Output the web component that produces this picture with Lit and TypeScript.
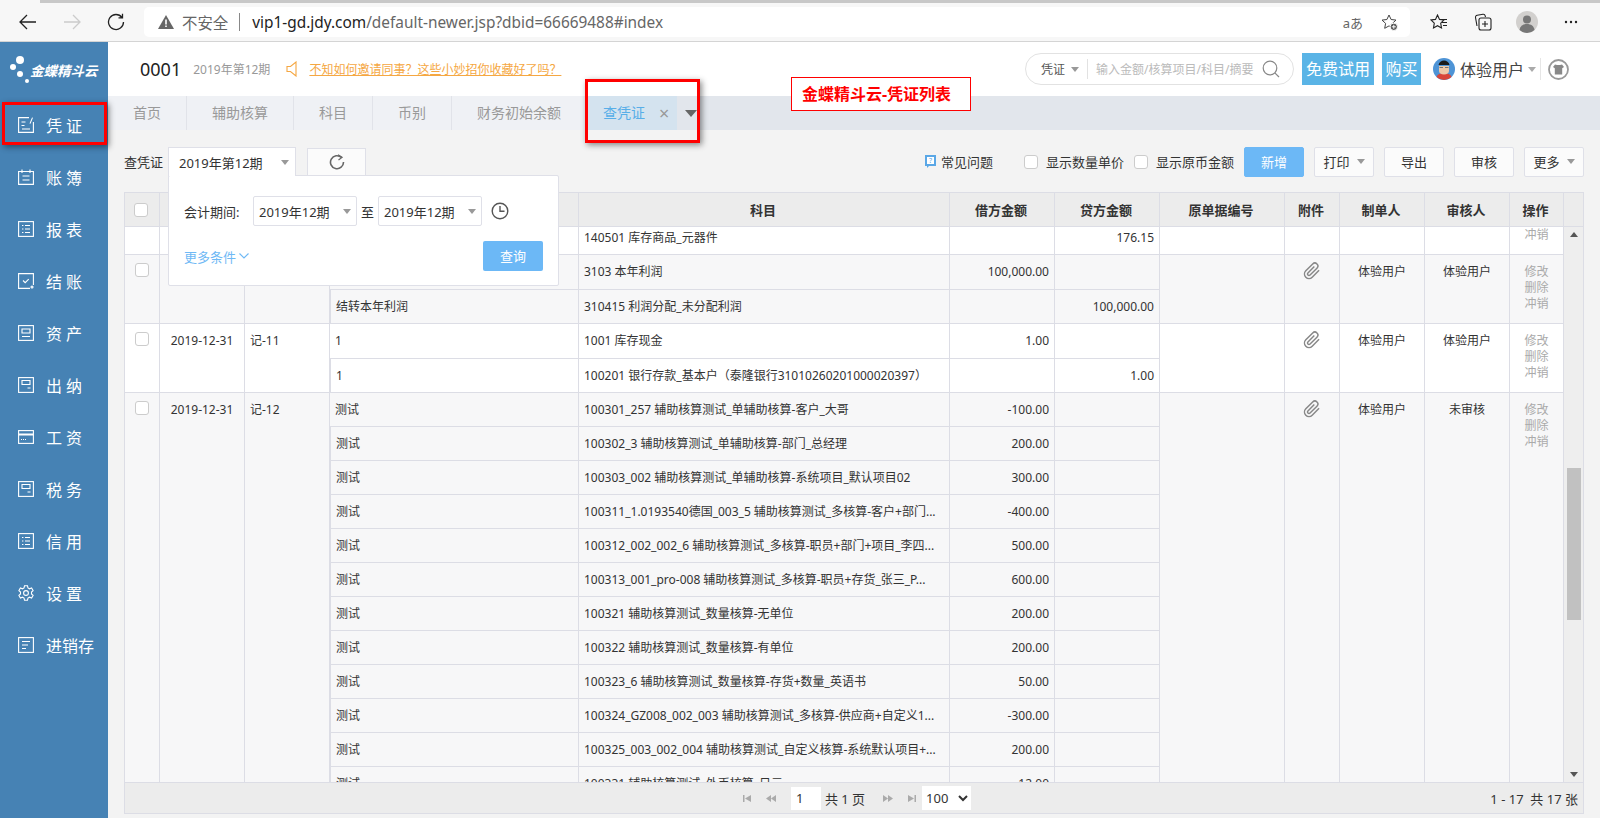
import { LitElement, html, css, svg } from 'lit';
import { customElement } from 'lit/decorators.js';

interface Row {
  summary: string;
  account: string;
  debit?: string;
  credit?: string;
  tall?: boolean;
}

interface Voucher {
  date: string;
  no: string;
  attach: boolean;
  maker: string;
  auditor: string;
  ops: string[];
  partial?: boolean; // scrolled, only its last row is in view
  rows: Row[];
}

const ri = (d: any) => html`<svg class="nav-ico" viewBox="0 0 16 16" fill="none" stroke="#fff" stroke-width="1.1">${d}</svg>`;

const listIcon = svg`<rect x=".6" y=".6" width="14.8" height="14.8"/><path d="M4 4.5h1.4M7 4.5h5M4 8h1.4M7 8h5M4 11.5h1.4M7 11.5h5"/>`;
const boxIcon = svg`<rect x=".6" y=".6" width="14.8" height="14.8"/><path d="M4 3.5h8v4H4zM9.5 11h3"/>`;

const NAV = [
  { name: '凭证', wide: true, icon: ri(svg`<path d="M11 .6H.6v14.8h14.8V5M3.5 5h4M3.5 8.500h3M14.500 .6l-2.500 6M4 12h8"/>`) },
  { name: '账簿', wide: true, icon: ri(svg`<path d="M.6 2.500h14.800v12.900H.6zM4 .4v3.500M12 .4v3.500M4.500 7h7M4.500 11h7"/>`) },
  { name: '报表', wide: true, icon: ri(listIcon) },
  { name: '结账', wide: true, icon: ri(svg`<path d="M15.400 12V.6H.6v14.800H12M5 7.500l2.200 2.200 3.500-3.500"/><circle cx="14" cy="14" r="1"/>`) },
  { name: '资产', wide: true, icon: ri(svg`<rect x=".6" y=".6" width="14.8" height="14.8"/><path d="M4 4h8v4H4zM4 11.500h8"/>`) },
  { name: '出纳', wide: true, icon: ri(boxIcon) },
  { name: '工资', wide: true, icon: ri(svg`<rect x=".6" y="1.600" width="14.8" height="12.8"/><path d="M.6 5.500h14.800" stroke-width="2"/><path d="M3 10.500h5" stroke-dasharray="1 1"/>`) },
  { name: '税务', wide: true, icon: ri(boxIcon) },
  { name: '信用', wide: true, icon: ri(listIcon) },
  { name: '设置', wide: true, icon: ri(svg`<path d="M6.500 .8h3l.5 2.200 1.500.8 2.100-.8 1.500 2.600-1.600 1.500v1.800l1.600 1.500-1.500 2.600-2.100-.8-1.500.8-.5 2.200h-3L6 13l-1.500-.8-2.100.8L.9 10.400l1.600-1.500V7.100L.9 5.600l1.500-2.600 2.100.8L6 3z"/><circle cx="8" cy="8" r="2.400"/>`) },
  { name: '进销存', wide: false, icon: ri(svg`<rect x=".6" y=".6" width="14.8" height="14.8"/><path d="M4 4.500h8M4 8h6M4 11.500h4"/>`) },
];

const TABS = ['首页', '辅助核算', '科目', '币别', '财务初始余额'];

const COLS = [36, 85, 85, 249, 371, 105, 105, 125, 55, 85, 85, 54];

// the first three titles sit under the query popup
const HEAD = ['', '', '', '', '科目', '借方金额', '贷方金额', '原单据编号', '附件', '制单人', '审核人', '操作'];

const VOUCHERS: Voucher[] = [
  {
    date: '', no: '', attach: false, maker: '', auditor: '', ops: ['冲销'], partial: true,
    rows: [{ summary: '', account: '140501 库存商品_元器件', credit: '176.15' }],
  },
  {
    date: '', no: '', attach: true, maker: '体验用户', auditor: '体验用户', ops: ['修改', '删除', '冲销'],
    rows: [
      { summary: '', account: '3103 本年利润', debit: '100,000.00', tall: true },
      { summary: '结转本年利润', account: '310415 利润分配_未分配利润', credit: '100,000.00' },
    ],
  },
  {
    date: '2019-12-31', no: '记-11', attach: true, maker: '体验用户', auditor: '体验用户', ops: ['修改', '删除', '冲销'],
    rows: [
      { summary: '1', account: '1001 库存现金', debit: '1.00', tall: true },
      { summary: '1', account: '100201 银行存款_基本户（泰隆银行31010260201000020397）', credit: '1.00' },
    ],
  },
  {
    date: '2019-12-31', no: '记-12', attach: true, maker: '体验用户', auditor: '未审核', ops: ['修改', '删除', '冲销'],
    rows: [
      { summary: '测试', account: '100301_257 辅助核算测试_单辅助核算-客户_大哥', debit: '-100.00' },
      { summary: '测试', account: '100302_3 辅助核算测试_单辅助核算-部门_总经理', debit: '200.00' },
      { summary: '测试', account: '100303_002 辅助核算测试_单辅助核算-系统项目_默认项目02', debit: '300.00' },
      { summary: '测试', account: '100311_1.0193540德国_003_5 辅助核算测试_多核算-客户+部门...', debit: '-400.00' },
      { summary: '测试', account: '100312_002_002_6 辅助核算测试_多核算-职员+部门+项目_李四...', debit: '500.00' },
      { summary: '测试', account: '100313_001_pro-008 辅助核算测试_多核算-职员+存货_张三_P...', debit: '600.00' },
      { summary: '测试', account: '100321 辅助核算测试_数量核算-无单位', debit: '200.00' },
      { summary: '测试', account: '100322 辅助核算测试_数量核算-有单位', debit: '200.00' },
      { summary: '测试', account: '100323_6 辅助核算测试_数量核算-存货+数量_英语书', debit: '50.00' },
      { summary: '测试', account: '100324_GZ008_002_003 辅助核算测试_多核算-供应商+自定义1...', debit: '-300.00' },
      { summary: '测试', account: '100325_003_002_004 辅助核算测试_自定义核算-系统默认项目+...', debit: '200.00' },
      { summary: '测试', account: '100331 辅助核算测试_外币核算_日元', debit: '-12.00' },
    ],
  },
];

@customElement('app-root')
export class AppRoot extends LitElement {
  static styles = css`
    :host {
      display: block;
      width: 1600px;
      height: 818px;
      overflow: hidden;
      position: relative;
      font-family: "Noto Sans", "Noto Sans CJK SC", sans-serif;
      font-size: 12px;
      color: #333;
      background: #f3f3f3;
    }
    svg { display: block; flex: none; }

    /* browser chrome */
    .chrome { height: 42px; background: #f7f7f7; border-bottom: 1px solid #d4d4d4; box-sizing: border-box; }
    .strip { height: 3px; margin-left: 40px; background: #c8c8c8; }
    .bar { display: flex; align-items: center; height: 30px; margin-top: 4px; padding: 0 7px 0 6px; }
    .bar-btn { width: 44px; display: flex; justify-content: center; align-items: center; }
    .addr {
      flex: 1; height: 30px; margin: 0 7px 0 6px; background: #fff; border-radius: 5px;
      display: flex; align-items: center; padding: 0 12px 0 14px; font-size: 15.4px; color: #666;
    }
    .addr .warn { margin-right: 8px; }
    .addr .sep { width: 1px; height: 18px; background: #888; margin: 0 12px 0 11px; }
    .addr .host { color: #222; }
    .addr .end { margin-left: auto; display: flex; align-items: center; gap: 18px; }
    .addr .aa { font-size: 13px; color: #666; }

    .app { display: flex; height: 776px; }

    /* sidebar */
    .side { width: 108px; flex: none; background: #4682b4; color: #fff; }
    .logo { height: 57px; display: flex; align-items: center; position: relative; }
    .logo svg { margin-left: 8px; }
    .logo span { font-size: 13.5px; font-weight: 700; font-style: italic; white-space: nowrap; line-height: 18px; }
    .nav { display: flex; align-items: center; height: 52px; padding-left: 18px; font-size: 16px; }
    .nav-ico { width: 16px; height: 16px; margin-right: 12px; }
    .nav.wide span { letter-spacing: 4px; }

    /* header */
    .main { flex: 1; min-width: 0; display: flex; flex-direction: column; }
    .top { height: 54px; background: #fff; display: flex; align-items: center; padding: 0 31px 0 32px; }
    .code { font-size: 18px; color: #222; margin-right: 12px; }
    .period { color: #999; margin-right: 16px; }
    .tip { color: #f5a742; text-decoration: underline; margin-left: 12px; }
    .search {
      margin-left: auto; width: 269px; height: 32px; box-sizing: border-box; border: 1px solid #e2e2e2; border-radius: 16px;
      display: flex; align-items: center; padding: 0 13px 0 15px; color: #555;
    }
    .search .caret { margin: 0 8px 0 6px; }
    .search .line { width: 1px; height: 20px; background: #e2e2e2; margin-right: 8px; }
    .search .ph { color: #bbb; flex: 1; white-space: nowrap; }
    .cta { height: 32px; line-height: 32px; background: #5ab4e6; color: #fff; font-size: 16px; text-align: center; margin-left: 8px; }
    .cta.trial { width: 72px; }
    .cta.buy { width: 39px; }
    .user { display: flex; align-items: center; margin-left: 12px; font-size: 16px; color: #444; }
    .user .name { margin: 0 4px 0 5px; }
    .user .line { width: 1px; height: 22px; background: #e6e6e6; margin: 0 7px 0 4px; }

    /* tabs */
    .tabs { height: 34px; flex: none; background: #e2e6ec; display: flex; font-size: 14px; line-height: 34px; color: #999; }
    .tab { padding: 0 25px; background: #eff1f5; border-right: 1px solid #e1e3e9; box-sizing: border-box; }
    .tab.on { background: #d4e3ef; color: #58aee8; padding: 0 8px 0 16px; border: 0; display: flex; align-items: center; }
    .tab.on i { font-style: normal; font-size: 18px; color: #999; margin-left: 14px; }
    .more { display: flex; align-items: center; padding-left: 8px; }

    /* content */
    .body { flex: 1; min-height: 0; padding: 17px 16px 0 16px; display: flex; flex-direction: column; position: relative; }
    .tools { height: 29px; display: flex; align-items: center; font-size: 13px; margin-bottom: 16px; flex: none; }
    .sel-label { width: 44px; }
    .sel {
      width: 128px; height: 29px; box-sizing: border-box; background: #fff; border: 1px solid #dfe0e8; border-bottom: 0;
      display: flex; align-items: center; justify-content: space-between; padding: 0 6px 0 10px; position: relative; z-index: 3;
    }
    .refresh {
      width: 59px; height: 28px; box-sizing: border-box; margin-left: 11px; border: 1px solid #dfe0e8; background: #fbfbfb;
      display: flex; align-items: center; justify-content: center;
    }
    .right { margin-left: auto; display: flex; align-items: center; }
    .faq { display: flex; align-items: center; gap: 5px; margin-right: 31px; }
    .chk { width: 14px; height: 14px; box-sizing: border-box; border: 1px solid #ccc; border-radius: 3px; background: #fff; display: inline-block; }
    .show { display: flex; align-items: center; gap: 8px; margin-right: 10px; }
    .btn {
      height: 30px; width: 60px; box-sizing: border-box; border: 1px solid #dfe0e8; border-radius: 2px; background: #fbfbfb;
      display: flex; align-items: center; justify-content: center; gap: 7px; margin-left: 10px;
    }
    .btn.primary { background: #6cb8f6; border-color: #6cb8f6; color: #fff; margin-left: 0; }

    /* query popup */
    .pop {
      position: absolute; left: 60px; top: 45px; width: 391px; height: 111px; box-sizing: border-box; z-index: 2;
      background: #fff; border: 1px solid #dfe0e8; border-radius: 2px; font-size: 13px; padding: 20px 15px 0;
    }
    .pop-row { display: flex; align-items: center; height: 30px; }
    .pop-label { width: 69px; }
    .pop-sel {
      width: 104px; height: 30px; box-sizing: border-box; border: 1px solid #dfe0e8; border-radius: 2px;
      display: flex; align-items: center; justify-content: space-between; padding: 0 5px;
    }
    .pop-to { width: 21px; text-align: center; }
    .pop-row svg.clock { margin-left: 9px; }
    .pop-foot { display: flex; align-items: center; justify-content: space-between; margin-top: 15px; }
    .pop-more { color: #6fb9f5; display: flex; align-items: center; gap: 3px; }
    .pop-go { width: 60px; height: 30px; line-height: 30px; text-align: center; background: #6cb8f6; color: #fff; border-radius: 2px; }

    /* grid */
    .grid { flex: 1; min-height: 0; display: flex; flex-direction: column; }
    .grid-head { display: flex; flex: none; background: #ececec; }
    .grid-head .spacer { width: 20px; box-sizing: border-box; border: 1px solid #dcdde5; border-left: 0; }
    table { table-layout: fixed; border-collapse: separate; border-spacing: 0; width: 1440px; }
    th, td { box-sizing: border-box; border-right: 1px solid #dcdde5; border-bottom: 1px solid #dcdde5; }
    th:first-child, td:first-child { border-left: 1px solid #dcdde5; }
    th { height: 35px; border-top: 1px solid #dcdde5; font-size: 13px; font-weight: 700; color: #333; text-align: center; padding: 0 2px 0 0; }
    .grid-body { flex: 1; min-height: 0; display: flex; }
    .scroll { width: 1440px; overflow: hidden; }
    .scroll table { margin-top: -6px; }
    td { height: 34px; padding: 0 5px; white-space: nowrap; overflow: hidden; background: #fff; line-height: 16px; }
    tr.tall td { height: 35px; }
    tr.alt td { background: #f7f7f8; }
    td.cell-top { vertical-align: top; padding-top: 9px; text-align: center; }
    td.cell-left { text-align: left; }
    td.amt { text-align: right; padding-right: 5px; }
    td.ops { color: #aaa; white-space: normal; }
    td.ops.cut { padding-top: 6px; }
    td .chk { display: block; margin: -1px auto 0; }
    td svg { margin: -2px auto 0; }
    .sbar { width: 20px; flex: none; box-sizing: border-box; background: #eeeeee; border-right: 1px solid #dcdde5; display: flex; flex-direction: column; align-items: center; padding: 5px 0; }
    .thumb { width: 14px; height: 152px; background: #c1c1c1; margin-top: 231px; }
    .sbar .dn { margin-top: auto; }
    .pager {
      height: 32px; flex: none; background: #ececec; box-sizing: border-box; border: 1px solid #dcdde5;
      display: grid; grid-template-columns: 1fr auto 1fr; align-items: center; font-size: 13px; margin-bottom: 4px;
    }
    .pages { display: flex; align-items: center; padding-left: 6px; }
    .pages input { width: 30px; height: 23px; box-sizing: border-box; border: 0; background: #fff; padding: 0 5px; font: inherit; color: #333; margin: 0 4px 0 15px; }
    .pages select { width: 49px; height: 24px; border: 0; background: #fff; font: inherit; color: #333; margin-left: 6px; }
    .pages span { margin-right: 18px; }
    .pages .gap { margin-right: 15px; }
    .count { text-align: right; padding-right: 5px; }

    /* annotations laid over the screenshot */
    .note {
      position: absolute; left: 791px; top: 77px; width: 180px; height: 34px; box-sizing: border-box;
      border: 1px solid #f00; background: #fff; color: #f00; font-size: 16px; font-weight: 700; line-height: 32px; padding-left: 10px; white-space: nowrap;
    }
    .mark { position: absolute; box-sizing: border-box; border: 3px solid #f00; box-shadow: 2px 2px 6px rgba(0, 0, 0, .45); z-index: 5; }
    .mark.nav-mark { left: 2px; top: 102px; width: 105px; height: 43px; }
    .mark.tab-mark { left: 585px; top: 79px; width: 115px; height: 64px; }
  `;

  private caret(color = '#888') {
    return html`<svg width="8" height="5" viewBox="0 0 8 5"><path d="M0 0h8L4 5z" fill=${color}/></svg>`;
  }

  private renderChrome() {
    return html`
      <div class="chrome">
        <div class="strip"></div>
        <div class="bar">
          <div class="bar-btn"><svg width="18" height="16" viewBox="0 0 18 16" fill="none" stroke="#222" stroke-width="1.300"><path d="M1 8h16M8 1 1 8l7 7"/></svg></div>
          <div class="bar-btn"><svg width="18" height="16" viewBox="0 0 18 16" fill="none" stroke="#ccc" stroke-width="1.300"><path d="M17 8H1M10 1l7 7-7 7"/></svg></div>
          <div class="bar-btn"><svg width="18" height="18" viewBox="0 0 18 18" fill="none" stroke="#222" stroke-width="1.300"><path d="M15 4.500A7.500 7.500 0 1 0 16.500 9M15.500 .8v4h-4"/></svg></div>
          <div class="addr">
            <svg class="warn" width="16" height="14" viewBox="0 0 16 14"><path d="M8 0l8 14H0z" fill="#666"/><path d="M7.200 4.500h1.600v5H7.200zM7.200 10.500h1.600v1.600H7.200z" fill="#fff"/></svg>
            <span>不安全</span><span class="sep"></span>
            <span><span class="host">vip1-gd.jdy.com</span>/default-newer.jsp?dbid=66669488#index</span>
            <span class="end">
              <span class="aa">aあ</span>
              <svg width="17" height="17" viewBox="0 0 17 17" fill="none" stroke="#444" stroke-width="1"><path d="M8 1l2.100 4.500 4.900.6-3.600 3.300.9 4.900L8 11.900l-4.300 2.400.9-4.900L1 6.100l4.900-.6z"/><circle cx="12.800" cy="12.800" r="3.700" fill="#555" stroke="#fff"/><path d="M12.800 10.800v4M10.800 12.800h4" stroke="#fff"/></svg>
            </span>
          </div>
          <div class="bar-btn"><svg width="18" height="17" viewBox="0 0 18 17" fill="none" stroke="#222" stroke-width="1.100"><path d="M7.500 1l2 4.400 4.500.6-3.300 3.200.8 4.800-4-2.300-4 2.300.8-4.800L1 6l4.500-.6z"/><path d="M12 8.500h5M13 11.500h4M11 5.500h6" stroke-width="1"/></svg></div>
          <div class="bar-btn"><svg width="18" height="18" viewBox="0 0 18 18" fill="none" stroke="#222" stroke-width="1.100"><path d="M3 13 1.500 4.500A2 2 0 0 1 3.200 2.200L9 1.300a2 2 0 0 1 2.200 1.500L11.500 4"/><rect x="5" y="5" width="12" height="12" rx="2"/><path d="M11 8v6M8 11h6"/></svg></div>
          <div class="bar-btn"><svg width="22" height="22" viewBox="0 0 22 22"><circle cx="11" cy="11" r="11" fill="#d2d0ce"/><circle cx="11" cy="8.500" r="4" fill="#777"/><path d="M3.500 19c.5-4 3.500-6 7.500-6s7 2 7.500 6A11 11 0 0 1 3.500 19z" fill="#777"/></svg></div>
          <div class="bar-btn"><svg width="14" height="4" viewBox="0 0 14 4" fill="#222"><circle cx="2" cy="2" r="1.200"/><circle cx="7" cy="2" r="1.200"/><circle cx="12" cy="2" r="1.200"/></svg></div>
        </div>
      </div>
    `;
  }

  private renderSide() {
    return html`
      <aside class="side">
        <div class="logo">
          <svg width="22" height="34" viewBox="0 0 22 34" fill="#fff"><circle cx="12" cy="6" r="4"/><circle cx="5" cy="13" r="3"/><circle cx="12" cy="20" r="3"/><circle cx="19" cy="27" r="2"/></svg>
          <span>金蝶精斗云</span>
        </div>
        ${NAV.map((n) => html`<div class="nav ${n.wide ? 'wide' : ''}">${n.icon}<span>${n.name}</span></div>`)}
      </aside>
    `;
  }

  private renderTop() {
    return html`
      <div class="top">
        <span class="code">0001</span>
        <span class="period">2019年第12期</span>
        <svg width="11" height="16" viewBox="0 0 11 16" fill="none" stroke="#f5a742" stroke-width="1.100"><path d="M10 1v14L4.500 10.500H1v-5h3.500z"/></svg>
        <span class="tip">不知如何邀请同事？这些小妙招你收藏好了吗？</span>
        <div class="search">
          <span>凭证</span><span class="caret">${this.caret('#999')}</span><span class="line"></span>
          <span class="ph">输入金额/核算项目/科目/摘要</span>
          <svg width="18" height="18" viewBox="0 0 18 18" fill="none" stroke="#888" stroke-width="1.200"><circle cx="8" cy="8" r="6.800"/><path d="M12.800 12.800 17 17"/></svg>
        </div>
        <div class="cta trial">免费试用</div>
        <div class="cta buy">购买</div>
        <div class="user">
          <svg width="22" height="22" viewBox="0 0 22 22">
            <circle cx="11" cy="11" r="11" fill="#4e94d6"/>
            <path d="M3.500 19c1-3 4-4 7.500-4s6.500 1 7.500 4a11 11 0 0 1-15 0z" fill="#d8453a"/>
            <path d="M6 8h10v5c0 2-2 3.500-5 3.500S6 15 6 13z" fill="#eec9a8"/>
            <path d="M5.500 7c.5-3 3-4.500 5.500-4.500S16 4 16.500 7z" fill="#1b1b1b"/>
            <path d="M6.500 9.500h3.500M12 9.500h3.500" stroke="#777" stroke-width="1.200"/>
          </svg>
          <span class="name">体验用户</span>${this.caret('#aaa')}<span class="line"></span>
          <svg width="21" height="21" viewBox="0 0 21 21"><circle cx="10.500" cy="10.500" r="9.500" fill="none" stroke="#999" stroke-width="1.800"/><path d="M7 5.500l2 .6h3l2-.6 2 2.500-1.800 1.200v6.300H6.800V9.200L5 8z" fill="#888"/></svg>
        </div>
      </div>
    `;
  }

  private renderTabs() {
    return html`
      <div class="tabs">
        ${TABS.map((t) => html`<div class="tab">${t}</div>`)}
        <div class="tab on">查凭证<i>×</i></div>
        <div class="more"><svg width="12" height="7" viewBox="0 0 12 7"><path d="M0 0h12L6 7z" fill="#666"/></svg></div>
      </div>
    `;
  }

  private renderTools() {
    return html`
      <div class="tools">
        <span class="sel-label">查凭证</span>
        <div class="sel"><span>2019年第12期</span>${this.caret('#999')}</div>
        <div class="refresh"><svg width="16" height="16" viewBox="0 0 16 16" fill="none" stroke="#666" stroke-width="1.600"><path d="M12.500 3.500A6.500 6.500 0 1 0 14.500 8"/><path d="M9 .8 13 3.400 9.500 6" stroke-width="1.300"/></svg></div>
        <div class="right">
          <div class="faq">
            <svg width="11" height="13" viewBox="0 0 11 13"><path d="M0 0h11v11H4l-2 2v-2H0z" fill="#5aa7e6"/><rect x="2" y="2" width="7" height="7" fill="#fff"/><text x="5.500" y="8.300" font-size="7" text-anchor="middle" fill="#5aa7e6">?</text></svg>
            <span>常见问题</span>
          </div>
          <label class="show"><span class="chk"></span>显示数量单价</label>
          <label class="show"><span class="chk"></span>显示原币金额</label>
          <div class="btn primary">新增</div>
          <div class="btn">打印${this.caret('#999')}</div>
          <div class="btn">导出</div>
          <div class="btn">审核</div>
          <div class="btn">更多${this.caret('#999')}</div>
        </div>
      </div>
      <div class="pop">
        <div class="pop-row">
          <span class="pop-label">会计期间:</span>
          <div class="pop-sel"><span>2019年12期</span>${this.caret('#999')}</div>
          <span class="pop-to">至</span>
          <div class="pop-sel"><span>2019年12期</span>${this.caret('#999')}</div>
          <svg class="clock" width="18" height="18" viewBox="0 0 18 18" fill="none" stroke="#555" stroke-width="1.400"><circle cx="9" cy="9" r="7.800"/><path d="M9 4v5.300h4.500"/></svg>
        </div>
        <div class="pop-foot">
          <span class="pop-more">更多条件<svg width="10" height="6" viewBox="0 0 10 6" fill="none" stroke="#6fb9f5" stroke-width="1.200"><path d="M.5.500 5 5 9.500.500"/></svg></span>
          <div class="pop-go">查询</div>
        </div>
      </div>
    `;
  }

  private renderCols() {
    return html`<colgroup>${COLS.map((w) => html`<col style="width:${w}px">`)}</colgroup>`;
  }

  private renderVoucher(v: Voucher, index: number) {
    const clip = html`<svg width="18" height="18" viewBox="0 0 24 24" fill="none" stroke="#888" stroke-width="2"><path d="M21.440 11.050l-9.190 9.190a6 6 0 0 1-8.490-8.490l9.190-9.190a4 4 0 0 1 5.660 5.660l-9.200 9.190a2 2 0 0 1-2.830-2.830l8.490-8.480"/></svg>`;
    const span = v.rows.length;
    return v.rows.map((r, i) => html`
      <tr class="${index % 2 ? 'alt' : ''} ${r.tall ? 'tall' : ''}">
        ${i === 0 ? html`
          <td class="cell-top" rowspan=${span}>${v.partial ? '' : html`<span class="chk"></span>`}</td>
          <td class="cell-top" rowspan=${span}>${v.date}</td>
          <td class="cell-top cell-left" rowspan=${span}>${v.no}</td>` : ''}
        <td>${r.summary}</td>
        <td>${r.account}</td>
        <td class="amt">${r.debit ?? ''}</td>
        <td class="amt">${r.credit ?? ''}</td>
        ${i === 0 ? html`
          <td rowspan=${span}></td>
          <td class="cell-top" rowspan=${span}>${v.attach ? clip : ''}</td>
          <td class="cell-top" rowspan=${span}>${v.maker}</td>
          <td class="cell-top" rowspan=${span}>${v.auditor}</td>
          <td class="cell-top ops ${v.partial ? 'cut' : ''}" rowspan=${span}>${v.ops.map((o) => html`<div>${o}</div>`)}</td>` : ''}
      </tr>
    `);
  }

  private renderGrid() {
    return html`
      <div class="grid">
        <div class="grid-head">
          <table>
            ${this.renderCols()}
            <tr>${HEAD.map((h, i) => html`<th>${i === 0 ? html`<span class="chk" style="display:block;margin:0 auto"></span>` : h}</th>`)}</tr>
          </table>
          <div class="spacer"></div>
        </div>
        <div class="grid-body">
          <div class="scroll">
            <table>
              ${this.renderCols()}
              ${VOUCHERS.map((v, i) => this.renderVoucher(v, i))}
            </table>
          </div>
          <div class="sbar">
            <svg width="8" height="5" viewBox="0 0 8 5"><path d="M0 5h8L4 0z" fill="#555"/></svg>
            <div class="thumb"></div>
            <svg class="dn" width="8" height="5" viewBox="0 0 8 5"><path d="M0 0h8L4 5z" fill="#555"/></svg>
          </div>
        </div>
        <div class="pager">
          <div></div>
          <div class="pages">
            <svg class="gap" width="8" height="7" viewBox="0 0 8 7" fill="#aaa"><path d="M0 0h1.500v7H0zM8 0v7L2 3.500z"/></svg>
            <svg width="10" height="7" viewBox="0 0 10 7" fill="#aaa"><path d="M5 0v7L0 3.500zM10 0v7L5 3.500z"/></svg>
            <input value="1" />
            <span>共 1 页</span>
            <svg class="gap" width="10" height="7" viewBox="0 0 10 7" fill="#aaa"><path d="M0 0v7l5-3.500zM5 0v7l5-3.500z"/></svg>
            <svg width="8" height="7" viewBox="0 0 8 7" fill="#aaa"><path d="M0 0v7l6-3.500zM6.500 0H8v7H6.500z"/></svg>
            <select><option>100</option></select>
          </div>
          <div class="count">1 - 17 &nbsp;共 17 张</div>
        </div>
      </div>
    `;
  }

  render() {
    return html`
      ${this.renderChrome()}
      <div class="app">
        ${this.renderSide()}
        <div class="main">
          ${this.renderTop()}
          ${this.renderTabs()}
          <div class="body">
            ${this.renderTools()}
            ${this.renderGrid()}
          </div>
        </div>
      </div>
      <div class="note">金蝶精斗云-凭证列表</div>
      <div class="mark nav-mark"></div>
      <div class="mark tab-mark"></div>
    `;
  }
}
